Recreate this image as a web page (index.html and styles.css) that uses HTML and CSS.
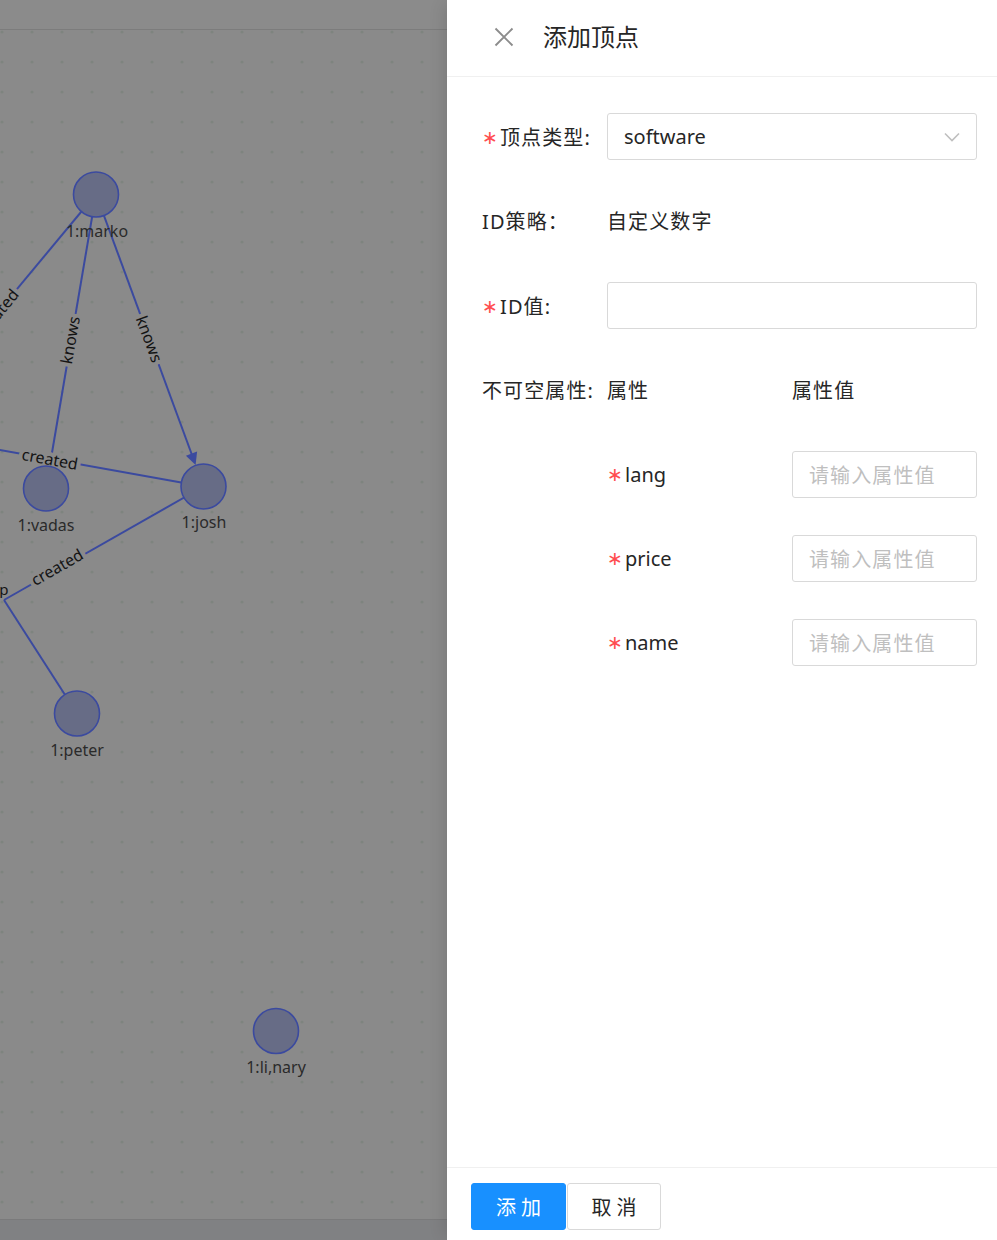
FILE: index.html
```html
<!DOCTYPE html>
<html lang="zh-CN">
<head>
<meta charset="utf-8">
<title>添加顶点</title>
<link rel="stylesheet" href="styles.css">
</head>
<body>
<div class="app">
  <section class="graph-pane">
    <div class="graph-toolbar"></div>
    <div class="graph-canvas">
      <svg class="graph-svg" width="447" height="1189" viewBox="0 30 447 1189" xmlns="http://www.w3.org/2000/svg">
        <defs>
          <pattern id="dots" x="-13" y="17" width="30" height="30" patternUnits="userSpaceOnUse">
            <circle cx="15" cy="15" r="1.6" fill="#7e847f"/>
          </pattern>
        </defs>
        <rect x="0" y="30" width="447" height="1189" fill="url(#dots)"/>
        <g class="edges">
          <line x1="96" y1="194" x2="-150" y2="490"/>
          <line x1="96" y1="194" x2="46" y2="488"/>
          <line x1="96" y1="194" x2="192" y2="455"/>
          <polygon class="arrow" points="195.6,465 197.1,451.6 185.9,455.8"/>
          <line x1="-200" y1="414" x2="203.5" y2="486.5"/>
          <line x1="203.5" y1="486.5" x2="4" y2="600"/>
          <line x1="4" y1="600" x2="77" y2="713.5"/>
        </g>
        <g class="edge-labels">
          <text transform="translate(-3 313) rotate(-50.3)">created</text>
          <text transform="translate(70 340) rotate(-80.3)">knows</text>
          <text transform="translate(149.5 339) rotate(69.8)">knows</text>
          <text transform="translate(50 459) rotate(10.3)">created</text>
          <text transform="translate(57 567) rotate(-29.6)">created</text>
          <text class="stub" transform="translate(4 593) rotate(180)">d</text>
        </g>
        <g class="nodes">
          <circle cx="96" cy="194.5" r="22.5"/>
          <circle cx="46" cy="488.5" r="22.5"/>
          <circle cx="203.5" cy="486.5" r="22.5"/>
          <circle cx="77" cy="713.5" r="22.5"/>
          <circle cx="276" cy="1031" r="22.5"/>
        </g>
        <g class="node-labels">
          <text x="97" y="237">1:marko</text>
          <text x="46" y="530.5">1:vadas</text>
          <text x="204" y="528">1:josh</text>
          <text x="77" y="755.5">1:peter</text>
          <text x="276" y="1073">1:li,nary</text>
        </g>
      </svg>
    </div>
    <div class="graph-status"></div>
  </section>

  <aside class="drawer">
    <header class="drawer-header">
      <button class="drawer-close" type="button" aria-label="关闭">
        <svg width="20" height="20" viewBox="0 0 20 20"><path d="M1.5 1.5 L18.5 18.5 M18.5 1.5 L1.5 18.5" stroke="#8c8c8c" stroke-width="1.9" fill="none"/></svg>
      </button>
      <h2 class="drawer-title">添加顶点</h2>
    </header>

    <div class="drawer-body">
      <div class="form-item">
        <label class="form-label cjk required">顶点类型:</label>
        <div class="select">
          <span class="select-value">software</span>
          <svg class="select-arrow" width="16" height="10" viewBox="0 0 16 10"><path d="M1 1.5 L8 8.5 L15 1.5" stroke="#bfbfbf" stroke-width="1.6" fill="none"/></svg>
        </div>
      </div>

      <div class="form-item">
        <label class="form-label cjk">ID策略：</label>
        <div class="form-text cjk">自定义数字</div>
      </div>

      <div class="form-item">
        <label class="form-label cjk required">ID值:</label>
        <div class="input"></div>
      </div>

      <div class="form-item prop-head">
        <label class="form-label cjk">不可空属性:</label>
        <div class="prop-col cjk">属性</div>
        <div class="prop-col cjk">属性值</div>
      </div>

      <div class="form-item prop-row">
        <span></span>
        <label class="form-label required">lang</label>
        <div class="input placeholder cjk">请输入属性值</div>
      </div>
      <div class="form-item prop-row">
        <span></span>
        <label class="form-label required">price</label>
        <div class="input placeholder cjk">请输入属性值</div>
      </div>
      <div class="form-item prop-row">
        <span></span>
        <label class="form-label required">name</label>
        <div class="input placeholder cjk">请输入属性值</div>
      </div>
    </div>

    <footer class="drawer-footer">
      <button class="btn btn-primary" type="button">添 加</button>
      <button class="btn" type="button">取 消</button>
    </footer>
  </aside>
</div>
</body>
</html>
```

FILE: styles.css
```css
* { box-sizing: border-box; }

html, body {
  margin: 0;
  padding: 0;
  width: 997px;
  height: 1240px;
  overflow: hidden;
  font-family: "Noto Sans", "Noto Sans CJK SC", sans-serif;
}

.app {
  display: flex;
  width: 997px;
  height: 1240px;
}

/* ---------- graph (dimmed by the drawer mask) ---------- */
.graph-pane {
  width: 447px;
  height: 1240px;
  display: flex;
  flex-direction: column;
  background: #8a8a8a;
}

.graph-toolbar {
  height: 30px;
  border-bottom: 1px solid #7c7c7c;
  background: #8b8b8b;
}

.graph-canvas {
  height: 1189px;
  overflow: hidden;
}

.graph-svg { display: block; }

.graph-status {
  flex: 1;
  background: #808183;
  border-top: 1px solid #7a7a7b;
}

.edges line {
  stroke: #3b4a9f;
  stroke-width: 2;
}

.edges .arrow { fill: #3b4a9f; }

.edge-labels text {
  font-family: "Noto Sans", sans-serif;
  font-size: 16px;
  fill: #141414;
  stroke: #8a8a8a;
  stroke-width: 8px;
  stroke-linejoin: round;
  paint-order: stroke;
  text-anchor: middle;
  dominant-baseline: central;
}

.edge-labels text.stub {
  stroke-width: 3px;
  font-size: 15px;
}

.nodes circle {
  fill: #676c86;
  stroke: #3b4a9f;
  stroke-width: 1.6;
}

.node-labels text {
  font-family: "Noto Sans", sans-serif;
  font-size: 16px;
  fill: #2a2a2a;
  text-anchor: middle;
}

/* ---------- drawer ---------- */
.drawer {
  width: 550px;
  height: 1240px;
  background: #fff;
  display: flex;
  flex-direction: column;
  box-shadow: -6px 0 16px -4px rgba(0, 0, 0, 0.12);
  position: relative;
  z-index: 1;
  color: rgba(0, 0, 0, 0.85);
}

.drawer-header {
  height: 77px;
  border-bottom: 1px solid #f0f0f0;
  display: flex;
  align-items: center;
  padding-left: 47px;
  padding-bottom: 2px;
}

.drawer-close {
  width: 20px;
  height: 20px;
  padding: 0;
  margin: 0 29px 0 0;
  border: 0;
  background: none;
  display: flex;
}

.drawer-title {
  margin: 0;
  font-size: 24px;
  font-weight: 400;
  line-height: 32px;
  color: #262626;
}

.drawer-body {
  flex: 1;
  padding: 36px 20px 0 35px;
}

.form-item {
  display: grid;
  grid-template-columns: 125px 1fr;
  align-items: center;
  height: 47px;
  margin-bottom: 37.4px;
  font-size: 20px;
}

.cjk { letter-spacing: 1.1px; }

.form-label {
  color: #262626;
  white-space: nowrap;
}

.form-label.required::before {
  content: "\2217";
  display: inline-block;
  width: 11px;
  margin-right: 7px;
  font-family: "DejaVu Sans", sans-serif;
  font-size: 19px;
  letter-spacing: 0;
  color: #ff4d4f;
  text-align: center;
  position: relative;
  top: -1px;
}

.form-text { color: #262626; }

.select,
.input {
  height: 47px;
  border: 1px solid #d9d9d9;
  border-radius: 3px;
  background: #fff;
  display: flex;
  align-items: center;
  padding: 0 16px;
}

.select { justify-content: space-between; }

.select-value { color: #262626; }

.select-arrow { margin-right: 0; }

.input.placeholder { color: #bfbfbf; }

.prop-head,
.prop-row {
  grid-template-columns: 125px 185px 1fr;
}

.prop-col { color: #262626; }

/* ---------- footer ---------- */
.drawer-footer {
  height: 73px;
  border-top: 1px solid #f0f0f0;
  padding: 15px 24px 0 24px;
  display: flex;
  gap: 1px;
}

.btn {
  height: 47px;
  width: 94px;
  padding: 0;
  font-family: "Noto Sans", "Noto Sans CJK SC", sans-serif;
  font-size: 20px;
  border: 1px solid #d9d9d9;
  border-radius: 3px;
  background: #fff;
  color: #262626;
}

.btn-primary {
  width: 95px;
  background: #1890ff;
  border-color: #1890ff;
  color: #fff;
}
```
